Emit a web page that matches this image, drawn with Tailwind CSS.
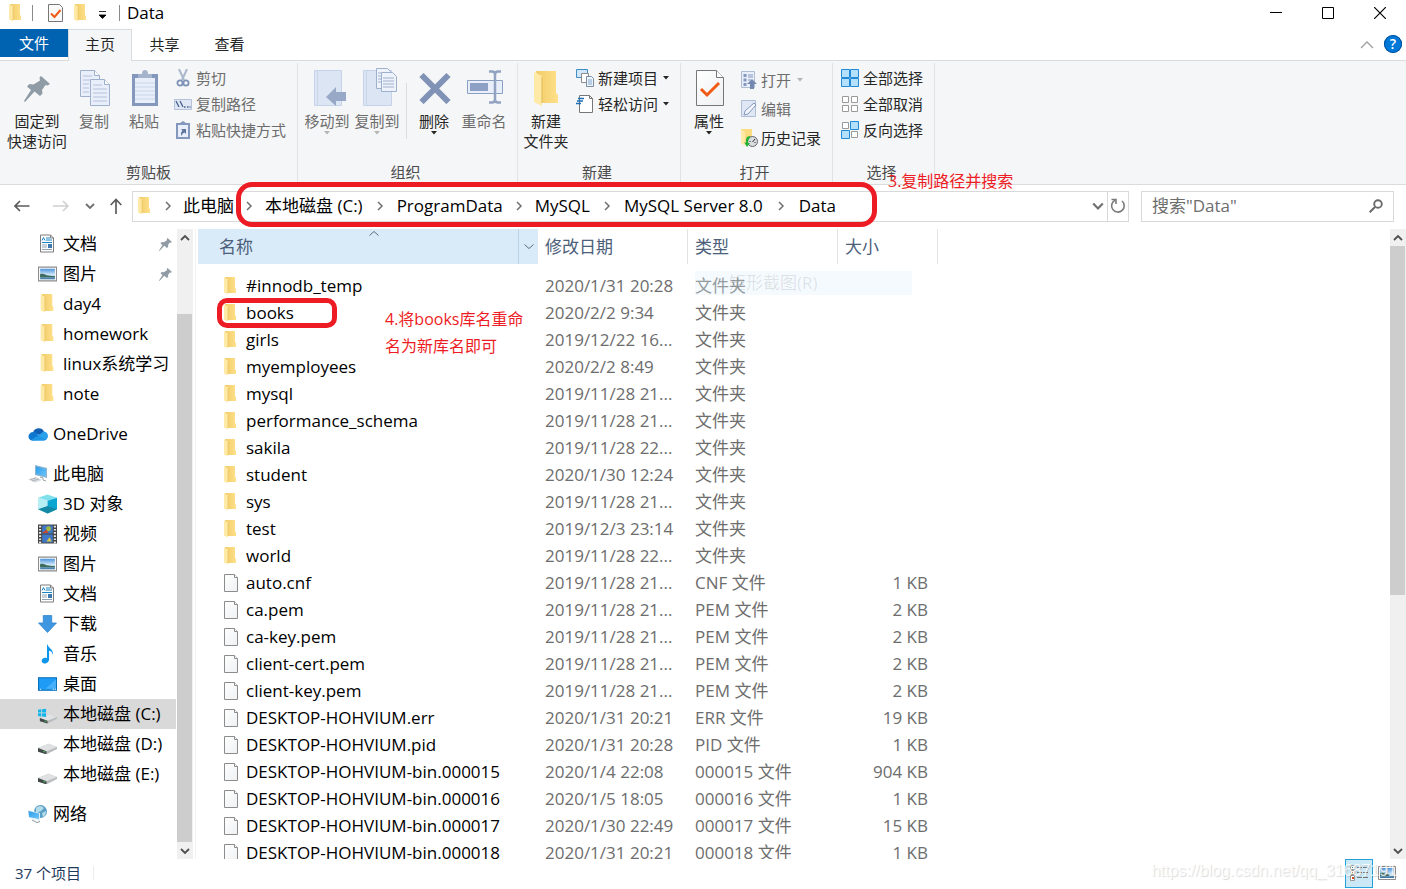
<!DOCTYPE html>
<html lang="zh-CN">
<head>
<meta charset="utf-8">
<meta name="viewport" content="width=device-width, initial-scale=1">
<title>Data</title>
<script src="https://cdn.jsdelivr.net/npm/@tailwindcss/browser@4"></script>
</head>
<body class="relative flex h-screen flex-col overflow-hidden bg-white font-['Open_Sans','Noto_Sans_CJK_SC',sans-serif] text-[17px] text-black">

<!-- Shared icons -->
<svg class="absolute size-0" aria-hidden="true">
  <defs>
    <linearGradient id="gold" x1="0" x2="1" y1="0" y2="0"><stop offset="0" stop-color="#f0cc68"/><stop offset="1" stop-color="#ffe08a"/></linearGradient>
    <linearGradient id="sky" x1="0" x2="0" y1="0" y2="1"><stop offset="0" stop-color="#4d94dc"/><stop offset=".6" stop-color="#d5ebfa"/><stop offset="1" stop-color="#2c6a9c"/></linearGradient>
    <linearGradient id="paper" x1="0" x2="1" y1="0" y2="1"><stop offset="0" stop-color="#fff"/><stop offset="1" stop-color="#eef0f2"/></linearGradient>
    <linearGradient id="screen" x1="0" x2="1" y1="0" y2="1"><stop offset="0" stop-color="#2d9be8"/><stop offset="1" stop-color="#6cc6fb"/></linearGradient>
  </defs>
  <symbol id="i-folder" viewBox="0 0 12 18"><path d="M1 0h10v11l1 1v4H4z" fill="url(#gold)"/><path d="M0 0.5 4 2.500v15L0 15.500z" fill="#ffe9a6"/><path d="M4 3v13" stroke="#e8c05a" stroke-width=".6"/></symbol>
  <symbol id="i-file" viewBox="0 0 15 18"><path d="M.5.5h10l3 3v14H.5z" fill="url(#paper)" stroke="#8c8c8c"/><path d="M10.500.5v3h3" fill="#fff" stroke="#8c8c8c"/></symbol>
  <symbol id="i-doc" viewBox="0 0 18 18"><path d="M2.500.5h10l3 3v14h-13z" fill="#fff" stroke="#7d7d7d"/><path d="M12.500.5v3h3" fill="none" stroke="#7d7d7d"/><path d="m4 6 1.500-3L7 6M8 3.500h4M8 5.500h6M4 8h10" fill="none" stroke="#1883c4"/><path d="M4 10.500h5M4 12.500h5M4 15h10" stroke="#8fa3b5"/><path d="M10 9.500h4v4h-4z" fill="#3b78b0"/></symbol>
  <symbol id="i-pic" viewBox="0 0 18 14"><path d="M.5.5h17v13H.5z" fill="#fff" stroke="#8c8c8c"/><path d="M2 2h14v10H2z" fill="url(#sky)"/><path d="M2 7c3-1 5 1 8 1.500 2 .5 4 .5 6 .5v1H2z" fill="#3d6b5c"/></symbol>
  <symbol id="i-pin" viewBox="0 0 26 26"><path d="M17 0l9 8-2.500 1.500-2-.5-3.500 5 .5 3.500L16 20l-5.500-4.500L1 26l-1-1 7-11-4-3.500 2.500-2.500 4 .5L16 4.500l-.5-3z" fill="#8f9ba5"/></symbol>
  <symbol id="i-cloud" viewBox="0 0 20 13"><path d="M5 5a6 6 0 0 1 11-1l-3 4z" fill="#0f5fb5"/><path d="M1 11A4.500 4.500 0 0 1 5 4.500c2 0 3 .5 4 1.500l6 6-11 1q-2 0-3-2z" fill="#0f77d0"/><path d="M15.500 4a4.500 4.500 0 0 1 0 9H4z" fill="#28a1ea"/><path d="M3 12.500 10 8l8 4q-1 1-2.500 1H4.500z" fill="#1e96e4"/></symbol>
  <symbol id="i-pc" viewBox="0 0 20 18"><path d="M7 0 19 3v10L7 10z" fill="#8db4cf"/><path d="M8 1.500 18 4v7.500L8 9z" fill="url(#screen)"/><path d="M0 14.500 8 12l6 3-7 2.500z" fill="#d6dade"/><path d="m2 14.500 6-1.500M4 16l7-2" stroke="#9da5ab" stroke-width=".7"/><path d="m12 12 3 1v2l3 1" stroke="#9aa4ab" fill="none"/></symbol>
  <symbol id="i-cube" viewBox="0 0 18 18"><path d="M0 3 9 0l9 3-9 3z" fill="#7fe0ec"/><path d="M0 3l9 3v12l-9-4z" fill="#b5eef3"/><path d="M18 3 9 6v12l9-4z" fill="#0aa5d0"/><path d="m0 14 9-3 9 3-9 4z" fill="#138aa5"/></symbol>
  <symbol id="i-film" viewBox="0 0 18 18"><path d="M0 0h18v18H0z" fill="#454545"/><path d="M4 1h10v7.500H4zM4 9.500h10V17H4z" fill="#3f78c8"/><path d="M1 2h2M1 5h2M1 8h2M1 11h2M1 14h2M1 17h2M15 2h2M15 5h2M15 8h2M15 11h2M15 14h2M15 17h2" stroke="#eee" stroke-width="1.600"/><circle cx="10" cy="4" r="2.300" fill="#a8b93b"/><path d="M4 8l4-3 2 3z" fill="#c8452f"/><path d="M8 16l3-4 2 4z" fill="#e0c341"/></symbol>
  <symbol id="i-down" viewBox="0 0 18 18"><path d="M5 1h8v7h4.500L9 17 .5 8H5z" fill="#3e97e0"/><path d="M5 1h8v7h4.500L9 17 .5 8H5z" fill="none" stroke="#2b7fc6" stroke-width=".7"/></symbol>
  <symbol id="i-music" viewBox="0 0 18 18"><path d="M9 0c1 4 6 4 5 10-.5-3-2-4-3.500-4v8c0 4.500-7 5.500-7 1.500 0-2.500 3-3.500 5-2.500V0z" fill="#0f95ea"/></symbol>
  <symbol id="i-desk" viewBox="0 0 18 13"><path d="M.5.5h17v12H.5z" fill="#1d9bf5" stroke="#0872b8"/><path d="M7 11 17 2v9z" fill="#47b0fa"/><path d="M2 11.500h1M14 11.500h1M16 11.500h1" stroke="#fff"/></symbol>
  <symbol id="i-drive" viewBox="0 0 18 12"><path d="m0 6 10-4 8 3v2L8 12l-8-3z" fill="#b9bcbe"/><path d="m0 6 10-4 8 3-10 4z" fill="#dfe1e2"/><path d="m0 6 8 3v3L0 9.500z" fill="#43484a"/><path d="M5 9.500h2" stroke="#4ac35a"/></symbol>
  <symbol id="i-drivec" viewBox="0 0 20 16"><path d="m2 10 10-4 8 3v2L10 16l-8-3z" fill="#b9bcbe"/><path d="m2 10 10-4 8 3-10 4z" fill="#dfe1e2"/><path d="m2 10 8 3v3l-8-2.500z" fill="#43484a"/><path d="M7 13.500h2" stroke="#4ac35a"/><path d="M0 1.500 3.500 1v3.200H0zM4.300 1 8.500.4v3.800H4.300zM0 5h3.500v3.400L0 8zM4.300 5h4.200v4l-4.200-.6z" fill="#14b5ea"/></symbol>
  <symbol id="i-net" viewBox="0 0 20 18"><circle cx="12.500" cy="6.500" r="6.500" fill="#5a9fc6"/><path d="M8 3q4-4 8 0l-3 3-5 2zM14 8l4-2q0 4-3 6z" fill="#b5dce9"/><path d="M0 5l12 3v8L1 13z" fill="#e3edf3"/><path d="m.5 6 10.500 2.500V14L1 12z" fill="url(#screen)"/><path d="m4 15 5 2.500 3-1" stroke="#8b98a0" fill="none"/></symbol>
  <symbol id="i-chev" viewBox="0 0 10 10"><path d="m3 1 4 4-4 4" fill="none" stroke="#6f6f6f" stroke-width="1.500"/></symbol>
  <symbol id="i-vdown" viewBox="0 0 10 10"><path d="m1 3 4 4 4-4" fill="none" stroke="currentColor" stroke-width="1.800"/></symbol>
  <symbol id="i-vup" viewBox="0 0 10 10"><path d="m1 7 4-4 4 4" fill="none" stroke="currentColor" stroke-width="1.800"/></symbol>
  <symbol id="i-tri" viewBox="0 0 6 4"><path d="M0 0h6L3 3.500z" fill="currentColor"/></symbol>
  <symbol id="i-check" viewBox="0 0 28 36"><path d="M.5.5h20l7 7v28H.5z" fill="url(#paper)" stroke="#777"/><path d="M20.500.5v7h7" fill="#fff" stroke="#777"/><path d="m5 19 6 6L23 13" fill="none" stroke="#f05a14" stroke-width="3"/></symbol>
  <symbol id="i-check-sm" viewBox="0 0 15 18"><path d="M.5.5h11l3 3v14H.5z" fill="#fafafa" stroke="#777"/><path d="m3 9.500 3.500 3.500L12.500 6" fill="none" stroke="#f05a14" stroke-width="2"/></symbol>
</svg>

<!-- Title bar -->
<header class="flex h-[29px] flex-none items-center pb-1">
  <svg class="ml-[9px] h-[18px] w-3"><use href="#i-folder"/></svg>
  <span class="ml-[11px] h-4 w-px bg-[#8a8a8a]"></span>
  <button aria-label="属性" class="ml-[15px]"><svg class="h-[18px] w-[15px]"><use href="#i-check-sm"/></svg></button>
  <button aria-label="新建文件夹" class="ml-[11px]"><svg class="h-[18px] w-3"><use href="#i-folder"/></svg></button>
  <button aria-label="自定义快速访问工具栏" class="ml-[13px] pt-1"><svg class="h-2 w-[7px]" viewBox="0 0 7 8"><path d="M0 .5h7M0 4h7L3.500 7.500z" fill="#000" stroke="#000" stroke-width=".8"/></svg></button>
  <span class="ml-[13px] h-4 w-px bg-[#8a8a8a]"></span>
  <h1 class="ml-[7px] text-[17px] leading-6">Data</h1>
  <div class="ml-auto flex h-6 items-center gap-10 pr-[20px]">
    <button aria-label="最小化"><svg class="h-3 w-3" viewBox="0 0 12 12"><path d="M0 5.500h12" stroke="#000"/></svg></button>
    <button aria-label="最大化"><svg class="h-3 w-3" viewBox="0 0 12 12"><path d="M.5.5h11v11H.5z" fill="none" stroke="#000"/></svg></button>
    <button aria-label="关闭"><svg class="h-3 w-3" viewBox="0 0 12 12"><path d="m0 0 12 12M12 0 0 12" stroke="#000" stroke-width="1.200"/></svg></button>
  </div>
</header>

<!-- Ribbon tabs -->
<div role="tablist" class="flex h-8 flex-none items-stretch border-b border-[#dadbdc] text-[15px] text-[#262626]">
  <button role="tab" class="mb-[3px] w-[68px] bg-[#0063b1] text-white">文件</button>
  <button role="tab" aria-selected="true" class="-mb-px w-16 border border-b-0 border-[#dadbdc] bg-[#f5f6f7] pb-0.5">主页</button>
  <button role="tab" class="w-[65px] pb-px">共享</button>
  <button role="tab" class="w-[65px] pb-px">查看</button>
  <button aria-label="折叠功能区" class="ml-auto"><svg class="h-2 w-3.5" viewBox="0 0 14 8"><path d="m1 7 6-6 6 6" fill="none" stroke="#a0a0a0" stroke-width="1.300"/></svg></button>
  <button aria-label="帮助" class="mx-1 ml-2.5 mt-1.5 size-[18px] rounded-full bg-[#0078d7] text-[14px] leading-[18px] font-semibold text-white ring-1 ring-inset ring-[#00509c]">?</button>
</div>

<!-- Ribbon -->
<div class="flex h-[124px] flex-none border-b border-[#dadbdc] bg-[#f5f6f7] pt-0.5 pb-px text-[15px] leading-5 text-[#262626]">
  <section class="flex w-[298px] flex-col border-r border-[#e2e3e4]">
    <div class="flex flex-1">
      <button class="flex w-[74px] flex-col items-center"><span class="flex h-12 items-center pt-1"><svg class="h-[26px] w-[26px]"><use href="#i-pin"/></svg></span>固定到<br>快速访问</button>
      <button class="flex w-10 flex-col items-center text-[#6d6d6d]"><span class="flex h-12 items-center pt-0.5 pl-0.5"><svg class="h-9 w-[31px]" viewBox="0 0 31 36"><g fill="#e9effa" stroke="#9fb0cc"><path d="M.5.5h14l5 5v21H.5z"/><path d="M10.500 9.500h14l5 5v21h-19z"/><path d="M24.500 9.500v5h5M14.500.5v5h5" fill="#fff"/></g><path d="M3 6h9M3 10h7M3 14h6M3 18h6M3 22h6M13 15h9M13 19h14M13 23h14M13 27h14M13 31h14" stroke="#b3c1da"/></svg></span>复制</button>
      <button class="flex w-[60px] flex-col items-center text-[#6d6d6d]"><span class="flex h-12 items-center pt-0.5 pl-0.5"><svg class="h-9 w-[26px]" viewBox="0 0 26 36"><path d="M0 4h26v32H0z" fill="#8498bd"/><path d="M3 8h20v25H3z" fill="#e9effa"/><path d="M3 13h20M3 17h20M3 21h20M3 25h20M3 29h20" stroke="#c9d5e8"/><path d="M6 8V4h4q0-4 3-4t3 4h4v4z" fill="#a5b3cc"/></svg></span>粘贴</button>
      <div class="flex flex-col pt-0.5 text-[#6d6d6d]">
        <button class="flex h-[26px] items-center gap-1"><span class="flex w-[18px] justify-center"><svg class="h-[18px] w-3.5" viewBox="0 0 14 18"><path d="m3 0 5 11M11 0 6 11" stroke="#a9b6cc" stroke-width="2"/><circle cx="4" cy="14" r="2.600" fill="none" stroke="#7f93b8" stroke-width="1.800"/><circle cx="10" cy="14" r="2.600" fill="none" stroke="#7f93b8" stroke-width="1.800"/></svg></span>剪切</button>
        <button class="flex h-[26px] items-center gap-1"><svg class="h-[11px] w-[18px]" viewBox="0 0 18 11"><path d="M.5.5h17v10H.5z" fill="#dfe7f5" stroke="#b5c1d8"/><path d="m2 2 3 6M6 2l3 6M10 8h1.500M13 8h1.500M15.500 8h1" stroke="#475f8c" stroke-width="1.300"/></svg>复制路径</button>
        <button class="flex h-[26px] items-center gap-1"><span class="flex w-[18px] justify-center"><svg class="h-[18px] w-3.5" viewBox="0 0 14 18"><path d="M1 3h12v14H1z" fill="#e9effa" stroke="#8498bd" stroke-width="2"/><path d="M4 4V2l3-2 3 2v2z" fill="#8498bd"/><path d="M5 8h5v5L8.500 11.500Q6 12 5.500 15 4 12 6.500 9.500z" fill="#5f779f"/></svg></span>粘贴快捷方式</button>
      </div>
    </div>
    <h2 class="h-[21px] text-center text-[#4b4b4b]">剪贴板</h2>
  </section>
  <section class="flex w-[220px] flex-col border-r border-[#e2e3e4]">
    <div class="flex flex-1">
      <button class="ml-1 flex w-[50px] flex-col items-center text-[#6d6d6d]"><span class="flex h-12 items-center pt-0.5 pl-1.5"><svg class="h-9 w-8" viewBox="0 0 32 36"><path d="M.5.5h27v35H.5z" fill="#dbe5f4" stroke="#c6d3e8"/><path d="M3.500 1v34" stroke="#c9d6ea"/><path d="M12 27 22 17v5h10v9H22v5z" fill="#98a9c7"/></svg></span>移动到<svg class="h-1 w-1.5 text-[#b5b5b5]"><use href="#i-tri"/></svg></button>
      <button class="flex w-[50px] flex-col items-center text-[#6d6d6d]"><span class="flex h-12 items-center pl-1.5"><svg class="h-[38px] w-[34px]" viewBox="0 0 34 38"><path d="M.5 2.500h28v35H.5z" fill="#dbe5f4" stroke="#c6d3e8"/><path d="M3.500 3v34" stroke="#c9d6ea"/><g fill="#edf2fb" stroke="#9fb0cc"><path d="M13.500.5h11l3 3v17h-14z"/><path d="M18.500 4.500h11l4 4v15h-15z"/></g><path d="M20 10h11M20 13h11M20 16h11M20 19h11M15 5h3M15 8h3M15 11h3M15 14h3" stroke="#9fb0cc"/></svg></span>复制到<svg class="h-1 w-1.5 text-[#b5b5b5]"><use href="#i-tri"/></svg></button>
      <span class="ml-1 mt-5 h-14 w-px bg-[#dcdddf]"></span>
      <button class="ml-0.5 flex w-[50px] flex-col items-center"><span class="flex h-12 items-center pt-0.5 pl-0.5"><svg class="h-8 w-8" viewBox="0 0 32 32"><path d="m2.500 3 27 27M29.500 3l-27 27" stroke="#8092b5" stroke-width="6"/></svg></span>删除<svg class="h-1 w-1.5"><use href="#i-tri"/></svg></button>
      <button class="flex w-[50px] flex-col items-center text-[#6d6d6d]"><span class="flex h-12 items-center pl-0.5"><svg class="h-[34px] w-9" viewBox="0 0 36 34"><path d="M.5 10.500h35v13H.5z" fill="#e9effa" stroke="#8ba0c4"/><path d="M3 13h18v8H3z" fill="#8ba0c4"/><path d="M22 1.500h3q3 0 3 3v25q0 3-3 3h-3M34 1.500h-3q-3 0-3 3v25q0 3 3 3h3" fill="none" stroke="#91a3c1" stroke-width="2.500"/></svg></span>重命名</button>
    </div>
    <h2 class="h-[21px] pr-1 text-center text-[#4b4b4b]">组织</h2>
  </section>
  <section class="flex w-[163px] flex-col border-r border-[#e2e3e4]">
    <div class="flex flex-1">
      <button class="ml-[3px] flex w-[50px] flex-col items-center"><span class="flex h-12 items-center pt-1"><svg class="h-9 w-6"><use href="#i-folder"/></svg></span>新建<br>文件夹</button>
      <div class="ml-[5px] flex flex-col pt-0.5">
        <button class="flex h-[26px] items-center gap-1"><svg class="h-[18px] w-[18px]" viewBox="0 0 18 18"><path d="M.5.5h11v8H.5z" fill="#cfe7f8" stroke="#3e8dc4"/><path d="M5.500 4.500h7v9h-7z" fill="#fff" stroke="#8b8b8b"/><path d="M10.500 7.500h5l2 2v8h-7z" fill="#eef4fb" stroke="#7d8ca3"/><path d="M12 11h4M12 13h4M12 15h4" stroke="#83a7d0"/></svg>新建项目<svg class="ml-px h-1 w-1.5"><use href="#i-tri"/></svg></button>
        <button class="flex h-[26px] items-center gap-1"><svg class="h-[18px] w-[18px]" viewBox="0 0 18 18"><path d="M3.500.5h10l3 3v14h-13z" fill="#fff" stroke="#777"/><path d="M13.500.5v3h3" fill="none" stroke="#777"/><path d="M2 3.500h6M1 6h6M0 8.500h5" stroke="#1b6fb8" stroke-width="1.400"/></svg>轻松访问<svg class="ml-px h-1 w-1.5"><use href="#i-tri"/></svg></button>
      </div>
    </div>
    <h2 class="h-[21px] pr-1 text-center text-[#4b4b4b]">新建</h2>
  </section>
  <section class="flex w-[152px] flex-col border-r border-[#e2e3e4]">
    <div class="flex flex-1">
      <button class="ml-[3px] flex w-[50px] flex-col items-center"><span class="flex h-12 items-center pt-0.5 pl-0.5"><svg class="h-9 w-7"><use href="#i-check"/></svg></span>属性<svg class="h-1 w-1.5"><use href="#i-tri"/></svg></button>
      <div class="ml-[7px] flex flex-col pt-0.5">
        <button class="flex h-[29px] items-center gap-1 text-[#6d6d6d]"><svg class="h-[18px] w-4" viewBox="0 0 16 18"><path d="M.5.5h13v16H.5z" fill="#e9effa" stroke="#aebcd4"/><path d="M2.500 3h3v3h-3zM2.500 7.500h3v3h-3zM2.500 12h3v3h-3z" fill="#8498bd"/><path d="M7 4h5M7 6h5M7 9h3" stroke="#8498bd"/><path d="m11 8 5 5h-3v5H9v-5H6z" fill="#7488b0"/></svg>打开<svg class="ml-0.5 h-1 w-1.5 text-[#b5b5b5]"><use href="#i-tri"/></svg></button>
        <button class="flex h-[29px] items-center gap-1 text-[#6d6d6d]"><svg class="h-[18px] w-4" viewBox="0 0 16 18"><path d="M.5.5h14v16H.5z" fill="#dfe7f5" stroke="#aebcd4"/><path d="M3 15 4 11 13 3l2 2-8 9z" fill="#f2f5fb" stroke="#8498bd"/></svg>编辑</button>
        <button class="flex h-[29px] items-center gap-[3px]"><svg class="h-[18px] w-[17px]" viewBox="0 0 17 18"><path d="M0 0h11v15H4l-4-1z" fill="#fbdc81"/><path d="M0 0 4 3v14l-4-3z" fill="#ffe9a6"/><circle cx="11.500" cy="12.500" r="5" fill="#d9dde0" stroke="#666"/><path d="M11.500 13 14 10M8.500 12.500h1M13.500 13.500h1" stroke="#333"/><path d="M9 7q-5 0-4 7l-2-1 3 5 3-4H7q0-4 2-5z" fill="#22b035"/></svg>历史记录</button>
      </div>
    </div>
    <h2 class="h-[21px] pr-1 text-center text-[#4b4b4b]">打开</h2>
  </section>
  <section class="flex w-[102px] flex-col border-r border-[#e2e3e4]">
    <div class="flex flex-1 flex-col pl-2 pt-0.5">
      <button class="flex h-[26px] items-center gap-1"><svg class="size-[18px]" viewBox="0 0 18 18"><g fill="#b5e0fc" stroke="#2289d8"><path d="M.5.5h8v8h-8zM9.500.5h8v8h-8zM.5 9.500h8v8h-8zM9.500 9.500h8v8h-8z"/></g></svg>全部选择</button>
      <button class="flex h-[26px] items-center gap-1"><svg class="size-[18px]" viewBox="0 0 18 18"><g fill="#fff" stroke="#9a9a9a"><path d="M1.500 1.500h6v6h-6zM10.500 1.500h6v6h-6zM1.500 10.500h6v6h-6zM10.500 10.500h6v6h-6z"/></g></svg>全部取消</button>
      <button class="flex h-[26px] items-center gap-1"><svg class="size-[18px]" viewBox="0 0 18 18"><path d="M1.500 1.500h6v6h-6zM10.500 10.500h6v6h-6z" fill="#fff" stroke="#9a9a9a"/><path d="M9.500.5h8v8h-8zM.5 9.500h8v8h-8z" fill="#b5e0fc" stroke="#2289d8"/></svg>反向选择</button>
    </div>
    <h2 class="h-[21px] pr-1 text-center text-[#4b4b4b]">选择</h2>
  </section>
</div>

<!-- Navigation bar -->
<div class="flex h-11 flex-none items-center pr-3 pb-0.5">
  <button aria-label="后退" class="ml-[14px]"><svg class="h-3 w-4" viewBox="0 0 16 12"><path d="M15.500 6H1M6 1 1 6l5 5" fill="none" stroke="#5c5c5c" stroke-width="1.700"/></svg></button>
  <button aria-label="前进" class="ml-[23px]"><svg class="h-3 w-4" viewBox="0 0 16 12"><path d="M0 6h15M10 1l5 5-5 5" fill="none" stroke="#cfcfcf" stroke-width="1.500"/></svg></button>
  <button aria-label="最近浏览的位置" class="ml-4 text-[#6f6f6f]"><svg class="size-2.5"><use href="#i-vdown"/></svg></button>
  <button aria-label="上移" class="ml-[15px]"><svg class="h-4 w-3" viewBox="0 0 12 16"><path d="M6 16V1.500M.7 7 6 1.500 11.300 7" fill="none" stroke="#5c5c5c" stroke-width="1.700"/></svg></button>
  <nav aria-label="地址" class="ml-2.5 flex h-[31px] flex-1 items-center border border-[#d9d9d9] pl-[5px]">
    <svg class="h-[18px] w-3"><use href="#i-folder"/></svg>
    <svg class="mx-[13px] size-2.5"><use href="#i-chev"/></svg><button class="-ml-[3px]">此电脑</button>
    <svg class="ml-2.5 mr-[11px] size-2.5"><use href="#i-chev"/></svg><button>本地磁盘 (C:)</button>
    <svg class="mx-3 size-2.5"><use href="#i-chev"/></svg><button>ProgramData</button>
    <svg class="mx-[11px] size-2.5"><use href="#i-chev"/></svg><button>MySQL</button>
    <svg class="mx-3 size-2.5"><use href="#i-chev"/></svg><button>MySQL Server 8.0</button>
    <svg class="mx-[13px] size-2.5"><use href="#i-chev"/></svg><button>Data</button>
    <button aria-label="以前的位置" class="ml-auto mr-[3px] text-[#6f6f6f]"><svg class="size-3"><use href="#i-vdown"/></svg></button>
    <button aria-label="刷新" class="flex h-full w-[21px] items-center justify-center border-l border-[#d9d9d9]"><svg class="size-4" viewBox="0 0 16 16"><path d="M5 2.200A6.300 6.300 0 1 0 12 3" fill="none" stroke="#7a7a7a" stroke-width="1.600"/><path d="M1.500 1.500H6V6" fill="none" stroke="#7a7a7a" stroke-width="1.600"/></svg></button>
  </nav>
  <form class="ml-3 flex h-[31px] w-[253px] items-center border border-[#d9d9d9] pr-2.5">
    <input type="search" aria-label="搜索 Data" placeholder='搜索"Data"' class="min-w-0 flex-1 pl-2.5 text-[17px] outline-none placeholder:text-[#6d6d6d]">
    <svg class="size-3.5" viewBox="0 0 14 14"><circle cx="9" cy="5" r="3.800" fill="none" stroke="#6a6a6a" stroke-width="1.900"/><path d="M6 8 .7 13.300" stroke="#6a6a6a" stroke-width="2"/></svg>
  </form>
</div>

<main class="flex min-h-0 flex-1">
  <!-- Navigation pane -->
  <nav id="tree" aria-label="导航窗格" class="w-44 flex-none overflow-hidden whitespace-nowrap"></nav>
  <div class="ml-px flex w-4 flex-none flex-col bg-[#f0f0f0] text-[#505050]" aria-hidden="true">
    <span class="flex h-[85px] flex-none justify-center pt-1"><svg class="size-2.5"><use href="#i-vup"/></svg></span>
    <span class="mr-px flex-1 bg-[#cdcdcd]"></span>
    <span class="flex h-[17px] items-center justify-center"><svg class="size-2.5"><use href="#i-vdown"/></svg></span>
  </div>
  <div class="ml-0.5 min-w-0 flex-1 overflow-hidden border-l border-[#f3f3f3] pl-0.5">
    <table class="w-[740px] table-fixed border-separate border-spacing-0 text-left">
      <colgroup><col class="w-[340px]"><col class="w-[150px]"><col class="w-[150px]"><col class="w-[100px]"></colgroup>
      <thead>
        <tr class="h-[35px] text-[#4c607a]">
          <th class="relative bg-[#d9ebf9] p-0 pl-[21px] font-normal">名称
            <svg class="absolute left-[171px] top-0.5 h-[5px] w-2.5" viewBox="0 0 10 5"><path d="m.5 4.500 4.500-4 4.500 4" fill="none" stroke="#5f6b78"/></svg>
            <span class="absolute inset-y-0 right-0 flex w-5 items-center justify-center border-l border-[#bcd4e6]"><svg class="h-[5px] w-2.5" viewBox="0 0 10 5"><path d="m.5.5 4.500 4 4.500-4" fill="none" stroke="#5f6b78"/></svg></span>
          </th>
          <th class="border-r border-[#e3e3e3] p-0 pl-[7px] font-normal">修改日期</th>
          <th class="border-r border-[#e3e3e3] p-0 pl-[7px] font-normal">类型</th>
          <th class="border-r border-[#e3e3e3] p-0 pl-[7px] font-normal">大小</th>
        </tr>
        <tr class="h-2"><td colspan="4" class="p-0"></td></tr>
      </thead>
      <tbody id="files"></tbody>
    </table>
  </div>
  <div class="flex w-4 flex-none flex-col bg-[#f0f0f0] text-[#505050]" aria-hidden="true">
    <span class="flex h-[17px] items-center justify-center"><svg class="size-2.5"><use href="#i-vup"/></svg></span>
    <span class="mr-px h-[349px] bg-[#cdcdcd]"></span>
    <span class="mt-auto flex h-[17px] items-center justify-center"><svg class="size-2.5"><use href="#i-vdown"/></svg></span>
  </div>
</main>

<!-- Status bar -->
<footer class="flex h-[30px] flex-none items-center pb-0.5 pl-[15px] text-[15px] text-[#1e395b]">
  <span>37 个项目</span>
  <span class="ml-3 h-3.5 w-px bg-[#ececec]"></span>
  <button aria-label="详细信息" class="ml-auto flex h-[29px] w-7 items-center justify-center border border-[#26a0da] bg-[#cbe8f6]"><svg class="h-4 w-[18px]" viewBox="0 0 18 16"><g fill="#fff" stroke="#999"><path d="M.5.5h4v4h-4zM.5 5.500h4v4h-4zM.5 10.500h4v5h-4z"/></g><path d="M2 2h1v1H2z" fill="#1883c4"/><path d="M2 7h1v1H2z" fill="#a98a3c"/><path d="M2 12h2v2H2z" fill="#d8431f"/><path d="M7 2.500h5M13 2.500h5M7 7.500h5M13 7.500h5M7 12.500h5M13 12.500h5" stroke="#777"/></svg></button>
  <button aria-label="大图标" class="ml-[5px] mr-2.5"><svg class="h-3.5 w-[18px]"><use href="#i-pic"/></svg></button>
</footer>

<!-- Annotations over the window -->
<div class="pointer-events-none absolute left-[695px] top-[271px] h-6 w-[217px] bg-[#dff0fc]/35 pl-[34px] text-[17px] leading-6 text-black/10">矩形截图(R)</div>
<div class="pointer-events-none absolute left-[236px] top-[182px] h-[45px] w-[641px] rounded-2xl border-5 border-[#ed1c24]"></div>
<div class="pointer-events-none absolute left-[217px] top-[298px] h-[30px] w-[120px] rounded-[10px] border-5 border-[#ed1c24]"></div>
<p class="absolute left-[888px] top-[169px] text-[16px] leading-6 text-[#ed1c24]">3.复制路径并搜索</p>
<p class="absolute left-[385px] top-[306px] text-[16px] leading-[27px] text-[#ed1c24]">4.将books库名重命<br>名为新库名即可</p>
<p class="pointer-events-none absolute bottom-2 right-[9px] font-['Liberation_Sans',sans-serif] text-[16px] leading-5 text-white/80 [text-shadow:1px_1px_1px_rgb(0_0_0/0.15)]">https://blog.csdn.net/qq_31687191</p>

<script>
  // Navigation pane: [icon, label, level, extra]
  const tree = [
    ['doc', '文档', 1, 'pin'], ['pic', '图片', 1, 'pin'], ['folder', 'day4', 1], ['folder', 'homework', 1],
    ['folder', 'linux系统学习', 1], ['folder', 'note', 1],
    ['cloud', 'OneDrive', 0], ['pc', '此电脑', 0],
    ['cube', '3D 对象', 1], ['film', '视频', 1], ['pic', '图片', 1], ['doc', '文档', 1], ['down', '下载', 1],
    ['music', '音乐', 1], ['desk', '桌面', 1], ['drivec', '本地磁盘 (C:)', 1, 'sel'], ['drive', '本地磁盘 (D:)', 1],
    ['drive', '本地磁盘 (E:)', 1], ['net', '网络', 0],
  ];
  document.getElementById('tree').innerHTML = tree.map(([icon, label, level, extra]) => `
    <a href="#" class="flex h-[30px] items-center ${level ? 'pl-[38px]' : 'mt-2.5 pl-7'} ${extra === 'sel' ? 'bg-[#d9d9d9]' : ''}">
      <svg class="mr-[5px] size-5 flex-none"><use href="#i-${icon}" width="${icon === 'folder' || icon === 'doc' ? 18 : level ? 19 : 20}" height="${icon === 'doc' || icon === 'folder' ? 19 : icon === 'drive' ? 28 : icon === 'drivec' ? 24 : 20}"/></svg>
      ${label}${extra === 'pin' ? '<svg class="ml-auto mr-1 size-[13px]"><use href="#i-pin"/></svg>' : ''}</a>`).join('');

  // File list: [name, modified, type, size]
  const dir = '文件夹';
  const files = [
    ['#innodb_temp', '2020/1/31 20:28', dir], ['books', '2020/2/2 9:34', dir], ['girls', '2019/12/22 16...', dir],
    ['myemployees', '2020/2/2 8:49', dir], ['mysql', '2019/11/28 21...', dir], ['performance_schema', '2019/11/28 21...', dir],
    ['sakila', '2019/11/28 22...', dir], ['student', '2020/1/30 12:24', dir], ['sys', '2019/11/28 21...', dir],
    ['test', '2019/12/3 23:14', dir], ['world', '2019/11/28 22...', dir],
    ['auto.cnf', '2019/11/28 21...', 'CNF 文件', '1 KB'], ['ca.pem', '2019/11/28 21...', 'PEM 文件', '2 KB'],
    ['ca-key.pem', '2019/11/28 21...', 'PEM 文件', '2 KB'], ['client-cert.pem', '2019/11/28 21...', 'PEM 文件', '2 KB'],
    ['client-key.pem', '2019/11/28 21...', 'PEM 文件', '2 KB'], ['DESKTOP-HOHVIUM.err', '2020/1/31 20:21', 'ERR 文件', '19 KB'],
    ['DESKTOP-HOHVIUM.pid', '2020/1/31 20:28', 'PID 文件', '1 KB'], ['DESKTOP-HOHVIUM-bin.000015', '2020/1/4 22:08', '000015 文件', '904 KB'],
    ['DESKTOP-HOHVIUM-bin.000016', '2020/1/5 18:05', '000016 文件', '1 KB'], ['DESKTOP-HOHVIUM-bin.000017', '2020/1/30 22:49', '000017 文件', '15 KB'],
    ['DESKTOP-HOHVIUM-bin.000018', '2020/1/31 20:21', '000018 文件', '1 KB'],
  ];
  document.getElementById('files').innerHTML = files.map(([name, date, type, size = '']) => `
    <tr class="h-[27px] whitespace-nowrap leading-[26px] text-[#6d6d6d]">
      <td class="p-0 pl-[26px] text-black"><span class="flex items-center">${type === dir
        ? '<svg class="mr-2.5 h-[18px] w-3"><use href="#i-folder"/></svg>'
        : '<svg class="mr-[7px] h-[18px] w-[15px]"><use href="#i-file"/></svg>'}${name}</span></td>
      <td class="p-0 pl-[7px]">${date}</td><td class="p-0 pl-[7px]">${type}</td><td class="p-0 pr-2.5 text-right">${size}</td>
    </tr>`).join('');
</script>
</body>
</html>
